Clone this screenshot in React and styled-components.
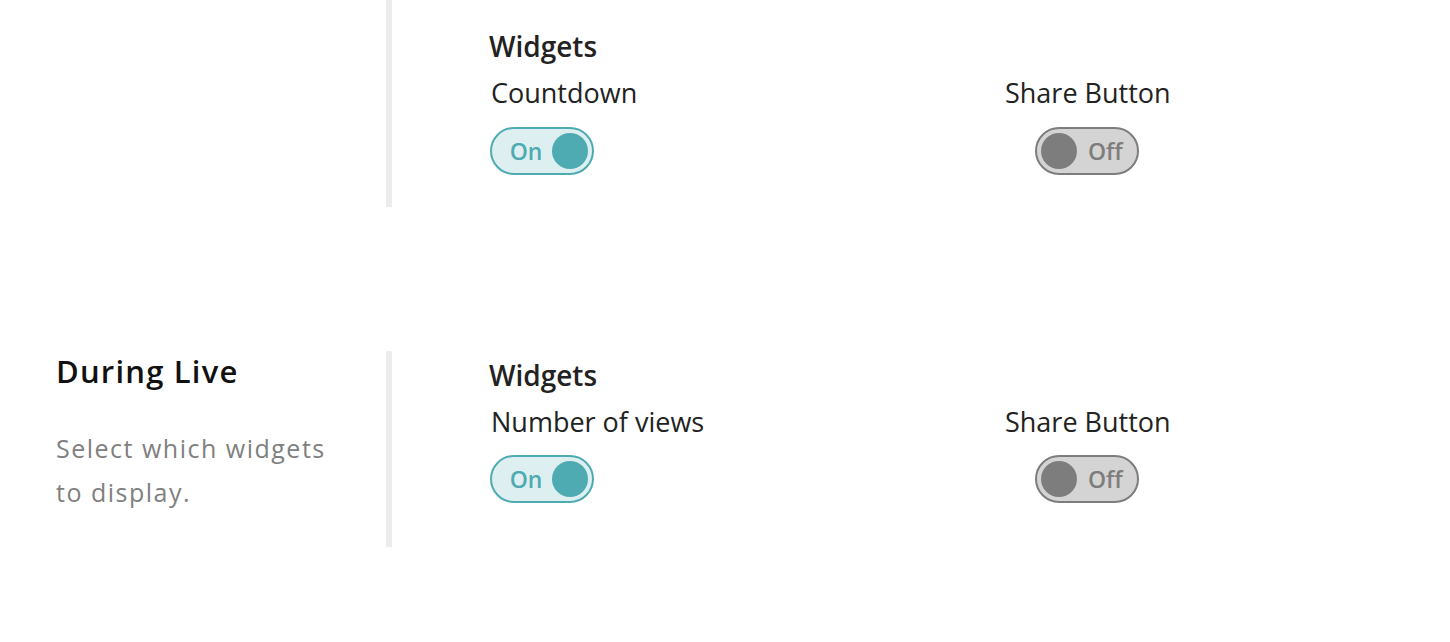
import React from 'react'
import styled, { createGlobalStyle } from 'styled-components'

const GlobalStyle = createGlobalStyle`
body {
  margin:0;
  background:#fff;
  font-family:"Open Sans", "Noto Sans", sans-serif;
}
`

const sections = [
  {
    title: null,
    widgets: [
      { label: 'Countdown', on: true },
      { label: 'Share Button', on: false },
    ],
  },
  {
    title: 'During Live',
    text: 'Select which widgets to display.',
    widgets: [
      { label: 'Number of views', on: true },
      { label: 'Share Button', on: false },
    ],
  },
]

function Toggle({ on }) {
  return (
    <Switch $on={on}>
      <Knob />
      <SwitchText $on={on}>{on ? 'On' : 'Off'}</SwitchText>
    </Switch>
  )
}

function App() {
  return (
    <Page>
      <GlobalStyle />
      {sections.map((s, i) => (
        <Section key={i}>
          <Aside>
            {s.title && <Title>{s.title}</Title>}
            {s.text && <Desc>{s.text}</Desc>}
          </Aside>
          <Panel $first={i === 0}>
            <Heading>Widgets</Heading>
            <Grid>
              {s.widgets.map((w, j) => (
                <Item key={j} $center={j === 1}>
                  <Label>{w.label}</Label>
                  <Toggle on={w.on} />
                </Item>
              ))}
            </Grid>
          </Panel>
        </Section>
      ))}
    </Page>
  )
}

export default App

const Page = styled.div`
display:flex;
flex-direction:column;
gap:144px;
padding-left:56px;
`
const Section = styled.section`
display:flex;
`
const Aside = styled.div`
width:330px;
flex-shrink:0;
padding-bottom:33px;
`
const Title = styled.h2`
margin:0;
font-size:31px;
line-height:40px;
font-weight:600;
letter-spacing:1.2px;
color:#111;
`
const Desc = styled.p`
margin:35px 0 0;
width:285px;
font-size:25px;
line-height:44px;
letter-spacing:1.5px;
color:#808080;
`
const Panel = styled.div`
flex:1;
border-left:6px solid #ececec;
padding:${p => (p.$first ? '28px' : '6px')} 0 32px 97px;
`
const Heading = styled.h3`
margin:0;
font-size:28px;
line-height:36px;
font-weight:600;
color:#222;
`
const Grid = styled.div`
display:grid;
grid-template-columns:514px auto;
margin:11px 0 0 1px;
`
const Item = styled.div`
display:inline-flex;
flex-direction:column;
align-items:${p => (p.$center ? 'center' : 'flex-start')};
justify-self:start;
gap:15.5px;
`
const Label = styled.span`
padding-left:1px;
font-size:27px;
line-height:36px;
color:#222;
`
const Switch = styled.div`
display:flex;
flex-direction:${p => (p.$on ? 'row-reverse' : 'row')};
align-items:center;
box-sizing:border-box;
width:104px;
height:48px;
padding:4px;
border-radius:24px;
border:2px solid ${p => (p.$on ? '#4eabb1' : '#7d7d7d')};
background:${p => (p.$on ? '#ddeff0' : '#d4d4d4')};
color:${p => (p.$on ? '#4eabb1' : '#7d7d7d')};
`
const Knob = styled.span`
width:36px;
height:36px;
border-radius:50%;
background:currentColor;
flex-shrink:0;
`
const SwitchText = styled.span`
flex:1;
padding-left:${p => (p.$on ? '4px' : '0')};
text-align:center;
font-size:23px;
font-weight:600;
`
